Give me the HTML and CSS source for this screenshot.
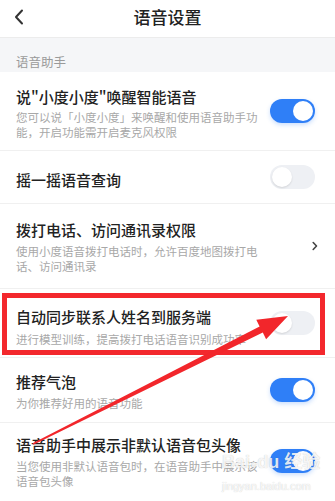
FILE: index.html
```html
<!DOCTYPE html>
<html lang="zh">
<head>
<meta charset="utf-8">
<link rel="stylesheet" href="styles.css">
</head>
<body>
<div class="page">
  <header class="nav">
    <svg class="back" width="10" height="16" viewBox="0 0 10 16"><path d="M8 1.5 L2 8 L8 14.5" fill="none" stroke="#333" stroke-width="2" stroke-linecap="round" stroke-linejoin="round"/></svg>
    <div class="nav-title">语音设置</div>
  </header>
  <div class="section">语音助手</div>

  <div class="row r1">
    <div class="text">
      <div class="title">说"小度小度"唤醒智能语音</div>
      <div class="sub">您可以说「小度小度」来唤醒和使用语音助手功能，开启功能需开启麦克风权限</div>
    </div>
    <div class="switch on"><span class="knob"></span></div>
  </div>

  <div class="row r2">
    <div class="text">
      <div class="title">摇一摇语音查询</div>
    </div>
    <div class="switch"><span class="knob"></span></div>
  </div>

  <div class="row r3">
    <div class="text">
      <div class="title">拨打电话、访问通讯录权限</div>
      <div class="sub">使用小度语音拨打电话时，允许百度地图拨打电话、访问通讯录</div>
    </div>
    <svg class="chev" width="6" height="10" viewBox="0 0 6 10"><path d="M1.2 1.5 L4.5 5 L1.2 8.5" fill="none" stroke="#444" stroke-width="1.6" stroke-linecap="round" stroke-linejoin="round"/></svg>
  </div>

  <div class="row r4">
    <div class="text">
      <div class="title">自动同步联系人姓名到服务端</div>
      <div class="sub nowrap">进行模型训练，提高拨打电话语音识别成功率</div>
    </div>
    <div class="switch"><span class="knob"></span></div>
    <div class="redbox"></div>
  </div>

  <div class="row r5">
    <div class="text">
      <div class="title">推荐气泡</div>
      <div class="sub">为你推荐好用的语音功能</div>
    </div>
    <div class="switch on"><span class="knob"></span></div>
  </div>

  <div class="row r6">
    <div class="text">
      <div class="title">语音助手中展示非默认语音包头像</div>
      <div class="sub">当您使用非默认语音包时，在语音助手中展示该语音包头像</div>
    </div>
    <div class="switch on"><span class="knob"></span></div>
  </div>

  <svg class="arrow" width="335" height="501" viewBox="0 0 335 501">
    <polygon points="32.6,443.3 259.6,326.4 256.3,319.7 288,316 266.1,339.3 262.8,332.6 33.4,444.7" fill="#f2262b"/>
  </svg>
  <div class="watermark">
    <div class="wm-logo">Bai<span class="paw">●</span>du 经验</div>
    <div class="wm-url">jingyan.baidu.com</div>
  </div>
</div>
</body>
</html>
```
FILE: styles.css
```css
html, body {
  margin: 0;
  padding: 0;
  background: #fff;
}
body {
  font-family: "Noto Sans CJK SC", "Noto Sans", sans-serif;
  color: #222;
}
.page {
  position: relative;
  width: 335px;
  height: 501px;
  overflow: hidden;
  background: #fff;
}
.nav {
  position: relative;
  height: 37px;
  display: flex;
  align-items: center;
  justify-content: center;
  border-bottom: 1px solid #ececec;
}
.back {
  position: absolute;
  left: 14px;
  top: 9px;
}
.nav-title {
  font-size: 17px;
  font-weight: 500;
  color: #222;
  line-height: 20px;
  margin-top: -4px;
}
.section {
  background: #f5f6f8;
  height: 34px;
  box-sizing: border-box;
  padding: 15px 16px 0;
  font-size: 12.5px;
  line-height: 18px;
  color: #9a9a9a;
}
.row {
  position: relative;
  display: flex;
  align-items: center;
  padding: 0 20px 0 16px;
  border-top: 1px solid #f0f0f0;
}
.section + .row {
  border-top: none;
}
.text {
  flex: 1;
  min-width: 0;
  padding: 15px 0 10px;
}
.title {
  font-size: 15px;
  line-height: 20px;
  font-weight: 500;
  color: #222;
  white-space: nowrap;
}
.sub {
  margin-top: 4px;
  width: 244px;
  font-size: 11.5px;
  line-height: 15px;
  color: #a8a8a8;
}
.sub.nowrap {
  white-space: nowrap;
  width: auto;
}
.r1 .text { padding: 15px 0 10px; }
.r1 .sub { margin-top: 3px; }
.r2 .text { padding: 19px 0 13px; }
.r3 .text { padding: 16px 0 14px; }
.r4 .text { padding: 18px 0 10px; }
.r4 .sub { margin-top: 5px; }
.r5 .text { padding: 14px 0 11px; }
.r5 .sub { margin-top: 4px; }
.r6 .text { padding: 12px 0 10px; }
.switch {
  flex: none;
  position: relative;
  width: 45px;
  height: 24px;
  border-radius: 12px;
  background: #eef0f4;
  margin-left: 10px;
}
.switch.on {
  background: #2f7ff7;
  box-shadow: 0 2px 4px rgba(47, 127, 247, 0.25);
}
.knob {
  position: absolute;
  top: 2px;
  left: 2px;
  width: 20px;
  height: 20px;
  border-radius: 50%;
  background: #fff;
  box-shadow: 0 1px 2px rgba(0, 0, 0, 0.12);
}
.switch.on .knob {
  left: 23px;
  box-shadow: none;
}
.chev {
  flex: none;
  margin-right: -3px;
}
.redbox {
  position: absolute;
  left: 2px;
  top: 4px;
  width: 323px;
  height: 62px;
  box-sizing: border-box;
  border: 5px solid #f3282d;
  pointer-events: none;
}
.arrow {
  position: absolute;
  left: 0;
  top: 0;
  pointer-events: none;
}
.watermark {
  position: absolute;
  left: 222px;
  top: 451px;
  width: 112px;
  pointer-events: none;
  font-family: "Liberation Sans", "Noto Sans CJK SC", sans-serif;
  color: rgba(255, 255, 255, 0.85);
  text-shadow: 0 0 1px rgba(0, 0, 0, 0.25);
}
.wm-logo {
  font-size: 18px;
  font-weight: bold;
  line-height: 22px;
}
.paw {
  font-size: 12px;
}
.wm-url {
  font-size: 11px;
  line-height: 14px;
  margin-top: 4px;
  color: rgba(255, 255, 255, 0.9);
}
```
